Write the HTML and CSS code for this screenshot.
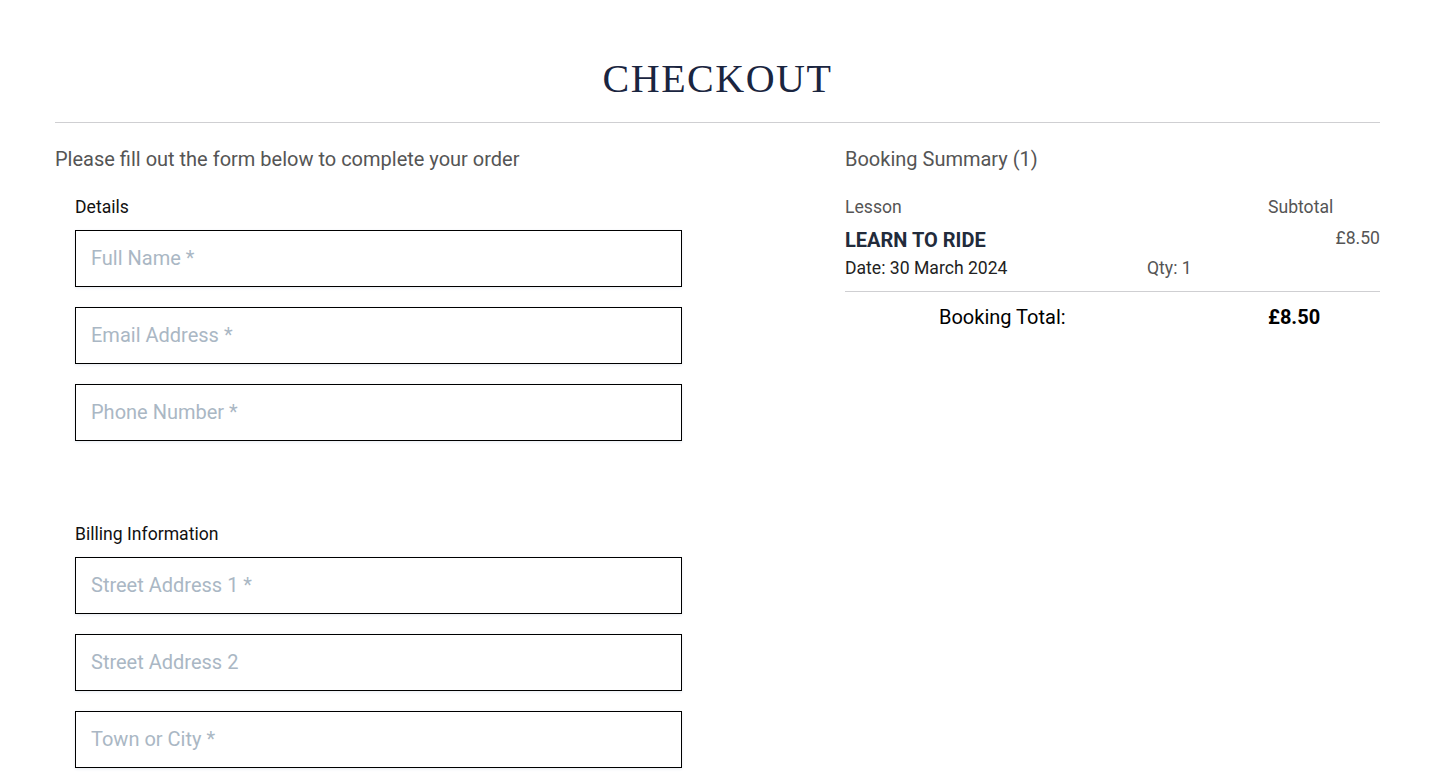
FILE: index.html
```html
<!DOCTYPE html>
<html lang="en">
<head>
<meta charset="utf-8">
<title>Checkout</title>
<link rel="stylesheet" href="styles.css">
</head>
<body>
<div class="page">
  <header class="page-head">
    <h1 class="title">Checkout</h1>
    <hr class="rule">
  </header>
  <main class="checkout">
    <section class="form-col">
      <p class="lead">Please fill out the form below to complete your order</p>
      <form class="order-form">
        <div class="group">
          <div class="group-label">Details</div>
          <input class="field" type="text" placeholder="Full Name *">
          <input class="field" type="email" placeholder="Email Address *">
          <input class="field" type="tel" placeholder="Phone Number *">
        </div>
        <div class="group group-billing">
          <div class="group-label">Billing Information</div>
          <input class="field" type="text" placeholder="Street Address 1 *">
          <input class="field" type="text" placeholder="Street Address 2">
          <input class="field" type="text" placeholder="Town or City *">
        </div>
      </form>
    </section>
    <aside class="summary">
      <p class="lead">Booking Summary (1)</p>
      <div class="sum-head">
        <span>Lesson</span>
        <span>Subtotal</span>
      </div>
      <div class="item">
        <div class="item-top">
          <span class="item-name">LEARN TO RIDE</span>
          <span class="item-price">£8.50</span>
        </div>
        <div class="item-meta">
          <span class="item-date">Date: 30 March 2024</span>
          <span class="item-qty">Qty: 1</span>
        </div>
      </div>
      <hr class="sum-rule">
      <div class="total">
        <span class="total-label">Booking Total:</span>
        <span class="total-value">£8.50</span>
      </div>
    </aside>
  </main>
</div>
</body>
</html>
```
FILE: styles.css
```css
* { box-sizing: border-box; }
html, body { margin: 0; padding: 0; background: #fff; }
body {
  font-family: Roboto, "Liberation Sans", Arial, sans-serif;
  color: #222;
  height: 780px;
  overflow: hidden;
}
.page { padding: 0 67px 0 55px; }
.page-head { padding-top: 54px; }
.title {
  margin: 0;
  text-align: center;
  font-family: "Liberation Serif", "Times New Roman", serif;
  font-weight: 400;
  font-size: 40px;
  line-height: 50px;
  letter-spacing: 1.5px;
  text-transform: uppercase;
  color: #1a2540;
}
.rule {
  margin: 18px 0 0;
  border: 0;
  height: 1px;
  background: #cfcfd2;
}
.checkout {
  display: grid;
  grid-template-columns: 1fr 535px;
  column-gap: 60px;
  padding-top: 23px;
}
.lead {
  margin: 0;
  font-size: 20px;
  line-height: 27px;
  color: #555;
}
.order-form { padding-left: 20px; margin-top: 22px; }
.group { display: flex; flex-direction: column; gap: 20px; width: 607px; }
.group-billing { margin-top: 81px; }
.group-label {
  font-size: 17.6px;
  line-height: 24px;
  color: #111;
  margin-bottom: -9px;
}
.field {
  display: block;
  width: 607px;
  height: 57px;
  border: 1px solid #000;
  border-radius: 0;
  padding: 0 15px 2px;
  font-family: Roboto, "Liberation Sans", Arial, sans-serif;
  font-size: 20px;
  color: #222;
  background: #fff;
  box-shadow: 0 1px 3px 0 #e6ebf1;
  outline: none;
}
.field::placeholder { color: #aab7c4; }
.sum-head {
  display: grid;
  grid-template-columns: 423px 1fr;
  margin-top: 22px;
  font-size: 17.6px;
  line-height: 24px;
  color: #555;
}
.item { margin-top: 9px; }
.item-top {
  display: flex;
  justify-content: space-between;
  align-items: flex-start;
}
.item-name {
  font-size: 20px;
  line-height: 24px;
  font-weight: 700;
  color: #222b3b;
}
.item-price {
  font-size: 17.6px;
  line-height: 20px;
  color: #555;
}
.item-meta {
  display: grid;
  grid-template-columns: 302px 1fr;
  margin-top: 4px;
  font-size: 17.6px;
  line-height: 24px;
}
.item-date { color: #222; }
.item-qty { color: #555; }
.sum-rule {
  margin: 11px 0 0;
  border: 0;
  height: 1px;
  background: #cfcfd2;
}
.total {
  display: grid;
  grid-template-columns: 423px 1fr;
  margin-top: 12px;
  font-size: 20px;
  line-height: 27px;
  color: #000;
}
.total-label { padding-left: 94px; }
.total-value { font-weight: 700; }
```
